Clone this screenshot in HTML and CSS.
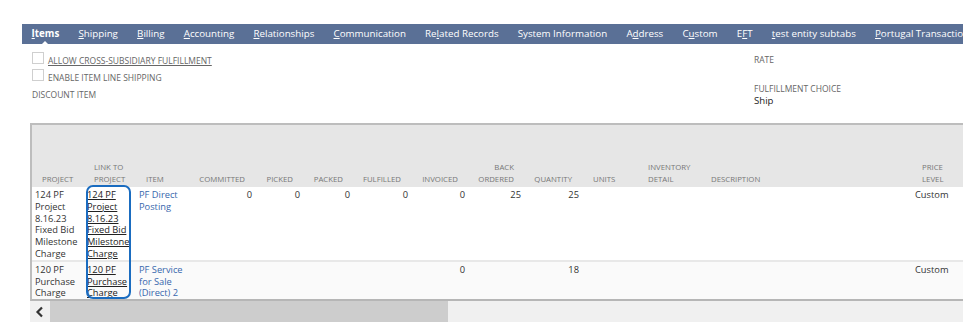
FILE: index.html
```html
<!DOCTYPE html>
<html lang="en">
<head>
<meta charset="utf-8">
<title>Items</title>
<link rel="stylesheet" href="styles.css">
</head>
<body>
<div class="page">
  <nav class="tabs">
    <span class="tab active"><u>I</u>tems</span>
    <span class="tab"><u>S</u>hipping</span>
    <span class="tab"><u>B</u>illing</span>
    <span class="tab"><u>A</u>ccounting</span>
    <span class="tab"><u>R</u>elationships</span>
    <span class="tab"><u>C</u>ommunication</span>
    <span class="tab">Re<u>l</u>ated Records</span>
    <span class="tab">System Information</span>
    <span class="tab">A<u>d</u>dress</span>
    <span class="tab">C<u>u</u>stom</span>
    <span class="tab">E<u>F</u>T</span>
    <span class="tab"><u>t</u>est entity subtabs</span>
    <span class="tab"><u>P</u>ortugal Transactions</span>
  </nav>

  <section class="fields">
    <div class="col-left">
      <div class="check-row"><span class="box"></span><span class="lbl under">ALLOW CROSS-SUBSIDIARY FULFILLMENT</span></div>
      <div class="check-row"><span class="box"></span><span class="lbl">ENABLE ITEM LINE SHIPPING</span></div>
      <div class="plain-row"><span class="lbl">DISCOUNT ITEM</span></div>
    </div>
    <div class="col-right">
      <div class="lbl">RATE</div>
      <div class="lbl fc">FULFILLMENT CHOICE</div>
      <div class="val">Ship</div>
    </div>
  </section>

  <section class="grid">
    <div class="grid-body">
      <table class="items">
        <colgroup>
          <col class="w52"><col class="w52"><col class="w54"><col class="w66"><col class="w48">
          <col class="w50"><col class="w58"><col class="w57"><col class="w56"><col class="w58">
          <col class="w55"><col class="w63"><col class="w211"><col class="w48"><col class="w60">
        </colgroup>
        <thead>
          <tr>
            <th>PROJECT</th>
            <th>LINK TO<br>PROJECT</th>
            <th>ITEM</th>
            <th class="num">COMMITTED</th>
            <th class="num">PICKED</th>
            <th class="num">PACKED</th>
            <th class="num">FULFILLED</th>
            <th class="num">INVOICED</th>
            <th class="num">BACK<br>ORDERED</th>
            <th class="num">QUANTITY</th>
            <th>UNITS</th>
            <th>INVENTORY<br>DETAIL</th>
            <th>DESCRIPTION</th>
            <th>PRICE<br>LEVEL</th>
            <th></th>
          </tr>
        </thead>
        <tbody>
          <tr>
            <td>124 PF Project 8.16.23 Fixed Bid Milestone Charge</td>
            <td><a class="rec">124 PF Project 8.16.23 Fixed Bid Milestone Charge</a></td>
            <td><a class="item">PF Direct Posting</a></td>
            <td class="num">0</td>
            <td class="num">0</td>
            <td class="num">0</td>
            <td class="num">0</td>
            <td class="num">0</td>
            <td class="num">25</td>
            <td class="num">25</td>
            <td></td>
            <td></td>
            <td></td>
            <td>Custom</td>
            <td></td>
          </tr>
          <tr class="alt">
            <td>120 PF Purchase Charge</td>
            <td><a class="rec">120 PF Purchase Charge</a></td>
            <td><a class="item">PF Service for Sale (Direct) 2</a></td>
            <td class="num"></td>
            <td class="num"></td>
            <td class="num"></td>
            <td class="num"></td>
            <td class="num">0</td>
            <td class="num"></td>
            <td class="num">18</td>
            <td></td>
            <td></td>
            <td></td>
            <td>Custom</td>
            <td></td>
          </tr>
        </tbody>
      </table>
      <div class="highlight"></div>
    </div>
    <div class="hscroll">
      <span class="sb-btn">
        <svg width="10" height="12" viewBox="0 0 10 12"><polyline points="7,1.5 2.5,6 7,10.5" fill="none" stroke="#333" stroke-width="2.2"/></svg>
      </span>
      <span class="sb-thumb"></span>
      <span class="sb-track"></span>
    </div>
  </section>
</div>
</body>
</html>
```
FILE: styles.css
```css
* { box-sizing: border-box; }

body {
  margin: 0;
  background: #fff;
  font-family: "Open Sans", "Noto Sans", sans-serif;
  color: #333;
}

.page {
  width: 963px;
  padding: 24px 0 0 22px;
  overflow: hidden;
}

/* Tabs */
.tabs {
  display: flex;
  height: 20px;
  background: #5a7096;
  white-space: nowrap;
  overflow: hidden;
  position: relative;
}
.tab {
  flex: none;
  padding: 0 9.6px;
  line-height: 20px;
  font-size: 9.75px;
  color: #fff;
  position: relative;
}
.tab u { text-decoration: underline; text-underline-offset: 1px; }
.tab.active { font-weight: 700; }
.tab.active::after {
  content: "";
  position: absolute;
  left: 50%;
  bottom: 0;
  margin-left: -3.5px;
  border-left: 3.5px solid transparent;
  border-right: 3.5px solid transparent;
  border-bottom: 3.5px solid #fff;
}

/* Fields */
.fields {
  display: flex;
  height: 79px;
  padding-left: 10px;
}
.col-left {
  width: 722px;
  padding-top: 7px;
}
.check-row, .plain-row {
  display: flex;
  align-items: flex-start;
  height: 17px;
}
.plain-row { margin-top: 1px; height: 18px; align-items: center; }
.box {
  width: 12px;
  height: 12px;
  border: 1px solid #cfcfcf;
  background: #fff;
  margin-top: 1px;
  margin-right: 4px;
  flex: none;
}
.check-row .lbl { line-height: 17px; padding-top: 1px; }
.lbl {
  font-size: 8.5px;
  color: #666;
  line-height: 12px;
  white-space: nowrap;
}
.lbl.under { text-decoration: underline; }
.col-right {
  padding-top: 10px;
}
.col-right .fc { margin-top: 17px; }
.val {
  font-size: 9.6px;
  line-height: 12px;
  color: #222;
}

/* Grid */
.grid {
  margin-left: 8px;
  width: 933px;
}
.grid-body {
  position: relative;
  overflow: hidden;
  border-top: 2px solid #bdbdbd;
  border-left: 2px solid #bdbdbd;
  border-bottom: 2px solid #b6b6b6;
}
.items {
  border-collapse: collapse;
  table-layout: fixed;
  width: 988px;
}
.w48 { width: 48px; } .w50 { width: 50px; } .w52 { width: 52px; }
.w54 { width: 54px; } .w55 { width: 55px; } .w56 { width: 56px; }
.w57 { width: 57px; } .w58 { width: 58px; } .w60 { width: 60px; }
.w63 { width: 63px; } .w66 { width: 66px; } .w211 { width: 211px; }

.items thead tr { height: 62px; }
.items th {
  background: #e6e6e6;
  vertical-align: bottom;
  text-align: left;
  font-weight: 400;
  font-size: 7.8px;
  line-height: 12px;
  color: #777;
  padding: 0 10px 2px 10px;
  white-space: nowrap;
}
.items th.num { text-align: right; padding-right: 11px; padding-left: 0; }

.items td {
  vertical-align: top;
  font-size: 9.3px;
  line-height: 11.8px;
  color: #333;
  padding: 2px 4px 0 3px;
  background: #fff;
}
.items td.num { text-align: right; }
.items tr.alt td {
  background: #fafafa;
  border-top: 2px solid #e8e8e8;
}
.rec { color: #222; text-decoration: underline; }
.item { color: #3767ad; }

.highlight {
  position: absolute;
  left: 54px;
  top: 60px;
  width: 45px;
  height: 114px;
  border: 2px solid #1a6cc0;
  border-radius: 7px;
}

/* Scrollbar */
.hscroll {
  display: flex;
  height: 21px;
}
.sb-btn {
  width: 20px;
  background: #f0f0f0;
  display: flex;
  align-items: center;
  justify-content: center;
}
.sb-thumb {
  width: 398px;
  background: #cdcdcd;
}
.sb-track {
  flex: 1;
  background: #f0f0f0;
}
```
